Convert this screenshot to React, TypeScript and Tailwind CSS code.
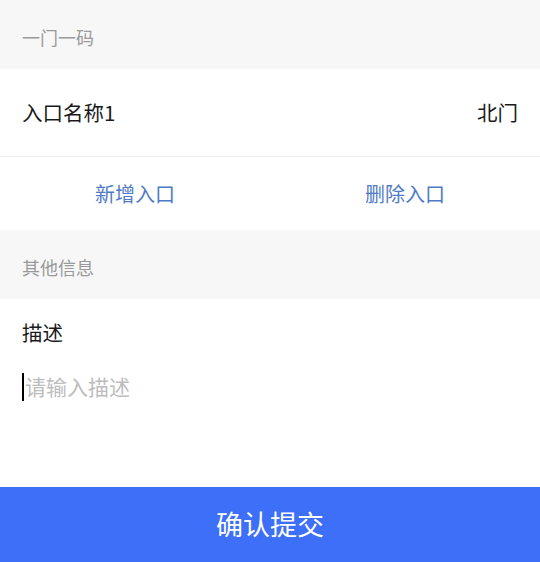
const font = { fontFamily: '"Noto Sans CJK SC", "Noto Sans", sans-serif' };

const SectionHeader = ({ title }: { title: string }) => (
  <div className="h-[69px] bg-[#f7f7f7] flex items-center px-[22px] pt-[5px]">
    <span className="text-[18px] text-[#9a9a9a]">{title}</span>
  </div>
);

export default function App() {
  return (
    <div className="w-[540px] h-[562px] bg-white flex flex-col overflow-hidden" style={font}>
      <SectionHeader title="一门一码" />
      {/* 入口行 */}
      <div className="h-[88px] flex items-center justify-between px-[22px] border-b border-[#eeeeee]">
        <span className="text-[20.5px] text-[#1a1a1a]">入口名称1</span>
        <span className="text-[20.5px] text-[#1a1a1a]">北门</span>
      </div>
      <div className="h-[73px] grid grid-cols-2 items-center">
        <button className="text-[20px] text-[#4f7bc6] text-center">新增入口</button>
        <button className="text-[20px] text-[#4f7bc6] text-center">删除入口</button>
      </div>
      <SectionHeader title="其他信息" />
      <div className="flex-1 flex flex-col px-[22px] pt-[18px]">
        <span className="text-[20.5px] text-[#1a1a1a]">描述</span>
        <div className="mt-[23px] flex items-center">
          <span className="w-[2px] h-[28px] bg-black" />
          <span className="text-[21px] text-[#bdbdbd] ml-[1px]">请输入描述</span>
        </div>
      </div>
      <button className="h-[75px] bg-[#3d6ff8] text-white text-[27px] flex items-center justify-center shrink-0">
        确认提交
      </button>
    </div>
  );
}
